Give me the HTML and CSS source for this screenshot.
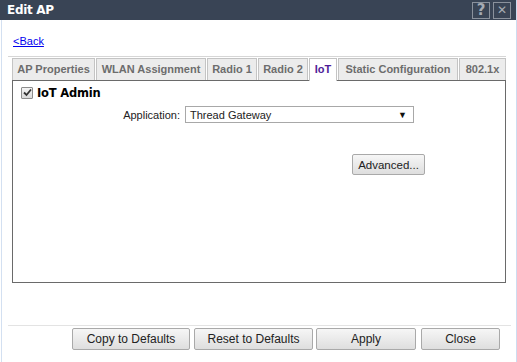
FILE: index.html
```html
<!DOCTYPE html>
<html>
<head>
<meta charset="utf-8">
<link rel="stylesheet" href="styles.css">
</head>
<body>
<div class="dialog">
  <div class="titlebar">
    <span class="title">Edit AP</span>
    <div class="tools">
      <span class="tbtn">?</span>
      <span class="tbtn x">✕</span>
    </div>
  </div>
  <div class="main">
    <div class="back-row"><a class="back" href="#">&lt;Back</a></div>
    <div class="tabstrip">
      <div class="tab t1">AP Properties</div>
      <div class="tab t2">WLAN Assignment</div>
      <div class="tab t3">Radio 1</div>
      <div class="tab t3">Radio 2</div>
      <div class="tab t4 active">IoT</div>
      <div class="tab t5">Static Configuration</div>
      <div class="tab t6">802.1x</div>
    </div>
    <div class="panel">
      <label class="check-row"><span class="cbox"><svg width="9" height="9" viewBox="0 0 9 9"><path d="M1 4.5 L3.5 7 L8 1.5" fill="none" stroke="#333" stroke-width="1.8"/></svg></span><span class="check-label">IoT Admin</span></label>
      <div class="field-row">
        <span class="field-label">Application:</span>
        <div class="select"><span>Thread Gateway</span><span class="arrow">▼</span></div>
      </div>
      <div class="adv-row"><button class="btn adv">Advanced...</button></div>
    </div>
    <div class="footer">
      <button class="btn fbtn b1">Copy to Defaults</button>
      <button class="btn fbtn b2">Reset to Defaults</button>
      <button class="btn fbtn b3">Apply</button>
      <button class="btn fbtn b4">Close</button>
    </div>
  </div>
</div>
</body>
</html>
```
FILE: styles.css
```css
html, body {
  margin: 0;
  padding: 0;
  background: #ffffff;
}
body {
  font-family: "Liberation Sans", Arial, sans-serif;
  font-size: 11px;
  color: #000;
}
.dialog {
  width: 517px;
  height: 362px;
  display: flex;
  flex-direction: column;
  box-sizing: border-box;
  border-right: 1px solid #cddcf0;
}
.titlebar {
  height: 20px;
  background: #394455;
  display: flex;
  align-items: center;
  justify-content: space-between;
  padding-left: 7px;
  padding-right: 5px;
}
.title {
  color: #fff;
  font-family: "DejaVu Sans", Verdana, sans-serif;
  font-weight: bold;
  font-size: 12px;
  letter-spacing: -0.3px;
}
.tools {
  display: flex;
  gap: 3px;
}
.tbtn {
  width: 16px;
  height: 15px;
  border: 1px solid #8a919c;
  color: #a6abb3;
  font-weight: bold;
  font-size: 15px;
  line-height: 15px;
  text-align: center;
  font-family: "DejaVu Sans", sans-serif;
}
.tbtn.x {
  font-size: 12px;
}
.main {
  flex: 1;
  display: flex;
  flex-direction: column;
  border-left: 1px solid #d3e0f1;
  margin-left: 1px;
  padding: 0 8px 0 6px;
}
.back-row {
  padding-top: 15px;
  height: 21px;
  padding-left: 5px;
}
.back {
  color: #0000ee;
  text-decoration: underline;
  font-size: 11px;
}
.tabstrip {
  display: flex;
  gap: 1px;
  border-top: 1px solid #d6d6d6;
  padding-left: 4px;
  margin-right: 2px;
  padding-top: 1px;
}
.tab {
  flex: none;
  box-sizing: border-box;
  height: 22px;
  line-height: 21px;
  text-align: center;
  white-space: nowrap;
  background: #ececec;
  border: 1px solid #c4c4c4;
  border-bottom: none;
  color: #6d6d6d;
  font-weight: bold;
  font-size: 11px;
}
.t1 { width: 83px; }
.t2 { width: 110px; }
.t3 { width: 50px; }
.t4 { width: 28px; }
.t5 { width: 120px; }
.t6 { width: 47px; }
.tab.active {
  background: #fff;
  color: #4e1c98;
  position: relative;
  z-index: 1;
  height: 23px;
  margin-bottom: -1px;
}
.panel {
  margin-left: 4px;
  margin-right: 2px;
  height: 203px;
  box-sizing: border-box;
  border: 1px solid #6a6a6a;
  display: flex;
  flex-direction: column;
}
.check-row {
  display: flex;
  align-items: center;
  gap: 4px;
  margin-top: 5px;
  padding-left: 8px;
  height: 13px;
}
.cbox {
  width: 10px;
  height: 10px;
  border: 1px solid #8c8c8c;
  background: linear-gradient(#f4f4f4, #d8d8d8);
  display: flex;
  align-items: center;
  justify-content: center;
  border-radius: 1px;
}
.check-label {
  font-family: "DejaVu Sans", Verdana, sans-serif;
  font-weight: bold;
  font-size: 11.5px;
  letter-spacing: -0.2px;
}
.field-row {
  display: flex;
  align-items: center;
  margin-top: 7px;
  height: 17px;
}
.field-label {
  width: 167px;
  text-align: right;
  padding-right: 5px;
  color: #222;
}
.select {
  width: 217px;
  height: 15px;
  border: 1px solid #a8a8a8;
  display: flex;
  align-items: center;
  justify-content: space-between;
  padding: 0 6px 0 4px;
  box-sizing: content-box;
}
.select span {
  color: #222;
}
.select .arrow {
  font-size: 9px;
  color: #111;
}
.adv-row {
  display: flex;
  justify-content: flex-end;
  padding-right: 80px;
  margin-top: 31px;
}
.btn {
  font-family: "Liberation Sans", Arial, sans-serif;
  font-size: 12px;
  color: #222;
  background: linear-gradient(#f6f6f6, #dedede);
  border: 1px solid #a9a9a9;
  border-radius: 2px;
  padding: 0;
  margin: 0;
}
.adv {
  width: 73px;
  height: 21px;
  font-size: 11.5px;
}
.footer {
  margin-top: 42px;
  border-top: 1px solid #e3e3e3;
  padding-top: 2px;
  display: flex;
  gap: 4px;
  padding-left: 64px;
  margin-right: -3px;
}
.fbtn {
  height: 22px;
}
.b1 { width: 118px; }
.b2 { width: 119px; }
.b3 { width: 100px; margin-left: -1px; }
.b4 { width: 79px; margin-left: 1px; }
```
